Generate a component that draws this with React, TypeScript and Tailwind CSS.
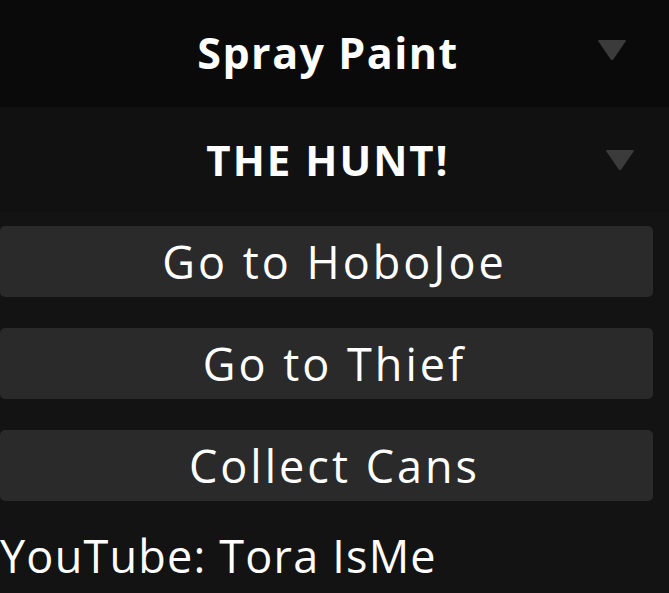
export default function App() {
  const font = { fontFamily: '"Open Sans", "Noto Sans", sans-serif' };
  const buttons = ["Go to HoboJoe", "Go to Thief", "Collect Cans"];

  return (
    <div className="w-[669px] h-[593px] bg-[#131313] overflow-hidden text-white" style={font}>
      {/* Section header */}
      <div className="h-[107px] bg-[#0a0a0a] flex items-center relative">
        <div className="w-[654px] pl-[2px] text-center text-[43px] font-bold leading-none tracking-[1.5px] pb-[2px]">Spray Paint</div>
        <Arrow className="absolute left-[597px] top-[39px]" />
      </div>

      {/* Sub header */}
      <div className="h-[105px] bg-[#111111] flex items-center relative">
        <div className="w-[654px] pl-[2px] text-center text-[42px] font-bold leading-none tracking-[2px]">THE HUNT!</div>
        <Arrow className="absolute left-[605px] top-[42px]" />
      </div>

      <div className="flex flex-col gap-[31px] pt-[14px] w-[653px]">
        {buttons.map((b) => (
          <div
            key={b}
            className="h-[71px] bg-[#2a2a2a] rounded-[5px] flex items-center justify-center pl-[16px] text-[45px] leading-none tracking-[3px]"
          >
            {b}
          </div>
        ))}
      </div>

      <div className="pt-[32px] text-[45px] leading-none tracking-[1.2px]">YouTube: Tora IsMe</div>
    </div>
  );
}

function Arrow({ className }: { className?: string }) {
  return (
    <svg className={className} width="30" height="22" viewBox="0 0 30 22">
      <path d="M2 1 H28 Q29.5 1 28.6 2.4 L16.2 20.4 Q15 22 13.8 20.4 L1.4 2.4 Q0.5 1 2 1 Z" fill="#3b3b3b" />
    </svg>
  );
}
